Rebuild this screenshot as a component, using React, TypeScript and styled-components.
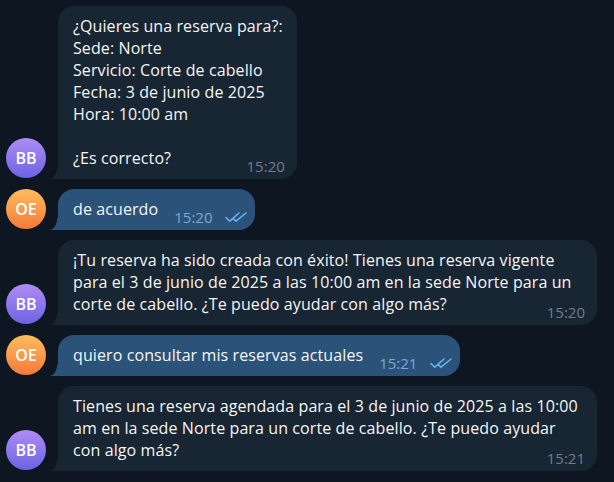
import styled, { createGlobalStyle } from 'styled-components';

const GlobalStyle = createGlobalStyle`
    html, body {
        margin: 0;
        padding: 0;
        background: #0e1621;
    }
    body {
        font-family: "Open Sans", "Noto Sans", sans-serif;
        -webkit-font-smoothing: antialiased;
    }
`;

type Kind = 'in' | 'out';

const colors = {
    in: { bubble: '#182533', time: '#6d7f8f' },
    out: { bubble: '#2b5278', time: '#7da8d3' },
};

const Chat = styled.div`
    width: 614px;
    height: 482px;
    box-sizing: border-box;
    padding: 6px 17px 8px 6px;
    display: flex;
    flex-direction: column;
    gap: 10px;
    overflow: hidden;
`;

const Row = styled.div`
    display: flex;
    align-items: flex-end;
    gap: 12px;
`;

const Avatar = styled.div<{ $from: string; $to: string }>`
    flex: 0 0 40px;
    width: 40px;
    height: 40px;
    border-radius: 50%;
    margin-bottom: 1px;
    background: linear-gradient(180deg, ${p => p.$from}, ${p => p.$to});
    color: #ffffff;
    font-size: 16px;
    font-weight: 600;
    display: flex;
    align-items: center;
    justify-content: center;
`;

const Bubble = styled.div<{ $kind: Kind }>`
    position: relative;
    display: flow-root;
    max-width: 510px;
    padding: 9px 14px 5px 15px;
    background: ${p => colors[p.$kind].bubble};
    border-radius: 16px 16px 16px 0;
    color: #f5f5f5;
    font-size: 16px;
    line-height: 22px;
    letter-spacing: 0.1px;
    white-space: pre-wrap;

    &::before {
        content: '';
        position: absolute;
        left: -8px;
        bottom: 0;
        width: 8px;
        height: 16px;
        background: radial-gradient(ellipse 8px 16px at 0 0, transparent 96%, ${p => colors[p.$kind].bubble} 100%);
    }
`;

const Meta = styled.span<{ $kind: Kind }>`
    float: right;
    display: flex;
    align-items: center;
    gap: 13px;
    margin: 11px ${p => (p.$kind === 'out' ? '-6px' : '-2px')} 0 16px;
    height: 16px;
    font-size: 15px;
    line-height: 16px;
    letter-spacing: 0;
    color: ${p => colors[p.$kind].time};
`;

const Ticks = () => (
    <svg width="22" height="11" viewBox="0 0 22 11" fill="none" stroke="#6ab2f2" strokeWidth="1.6" strokeLinecap="round" strokeLinejoin="round">
        <path d="M1 5.5 L4.8 9.2 L14 1" />
        <path d="M8.3 6.8 L11 9.2 L21 1" />
    </svg>
);

type Message = { who: 'BB' | 'OE'; text: string; time: string };

const messages: Message[] = [
    {
        who: 'BB',
        text: '¿Quieres una reserva para?:\nSede: Norte\nServicio: Corte de cabello\nFecha: 3 de junio de 2025\nHora: 10:00 am\n\n¿Es correcto?',
        time: '15:20',
    },
    { who: 'OE', text: 'de acuerdo', time: '15:20' },
    {
        who: 'BB',
        text: '¡Tu reserva ha sido creada con éxito! Tienes una reserva vigente para el 3 de junio de 2025 a las 10:00 am en la sede Norte para un corte de cabello. ¿Te puedo ayudar con algo más?',
        time: '15:20',
    },
    { who: 'OE', text: 'quiero consultar mis reservas actuales', time: '15:21' },
    {
        who: 'BB',
        text: 'Tienes una reserva agendada para el 3 de junio de 2025 a las 10:00 am en la sede Norte para un corte de cabello. ¿Te puedo ayudar con algo más?',
        time: '15:21',
    },
];

export default function App() {
    return (
        <>
            <GlobalStyle />
            <Chat>
                {messages.map((m, i) => {
                    const kind: Kind = m.who === 'OE' ? 'out' : 'in';
                    return (
                        <Row key={i}>
                            {kind === 'out'
                                ? <Avatar $from="#ffbd5c" $to="#f5793b">OE</Avatar>
                                : <Avatar $from="#b08cf7" $to="#6b63e3">BB</Avatar>}
                            <Bubble $kind={kind}>
                                {m.text}
                                <Meta $kind={kind}>
                                    {m.time}
                                    {kind === 'out' && <Ticks />}
                                </Meta>
                            </Bubble>
                        </Row>
                    );
                })}
            </Chat>
        </>
    );
}
